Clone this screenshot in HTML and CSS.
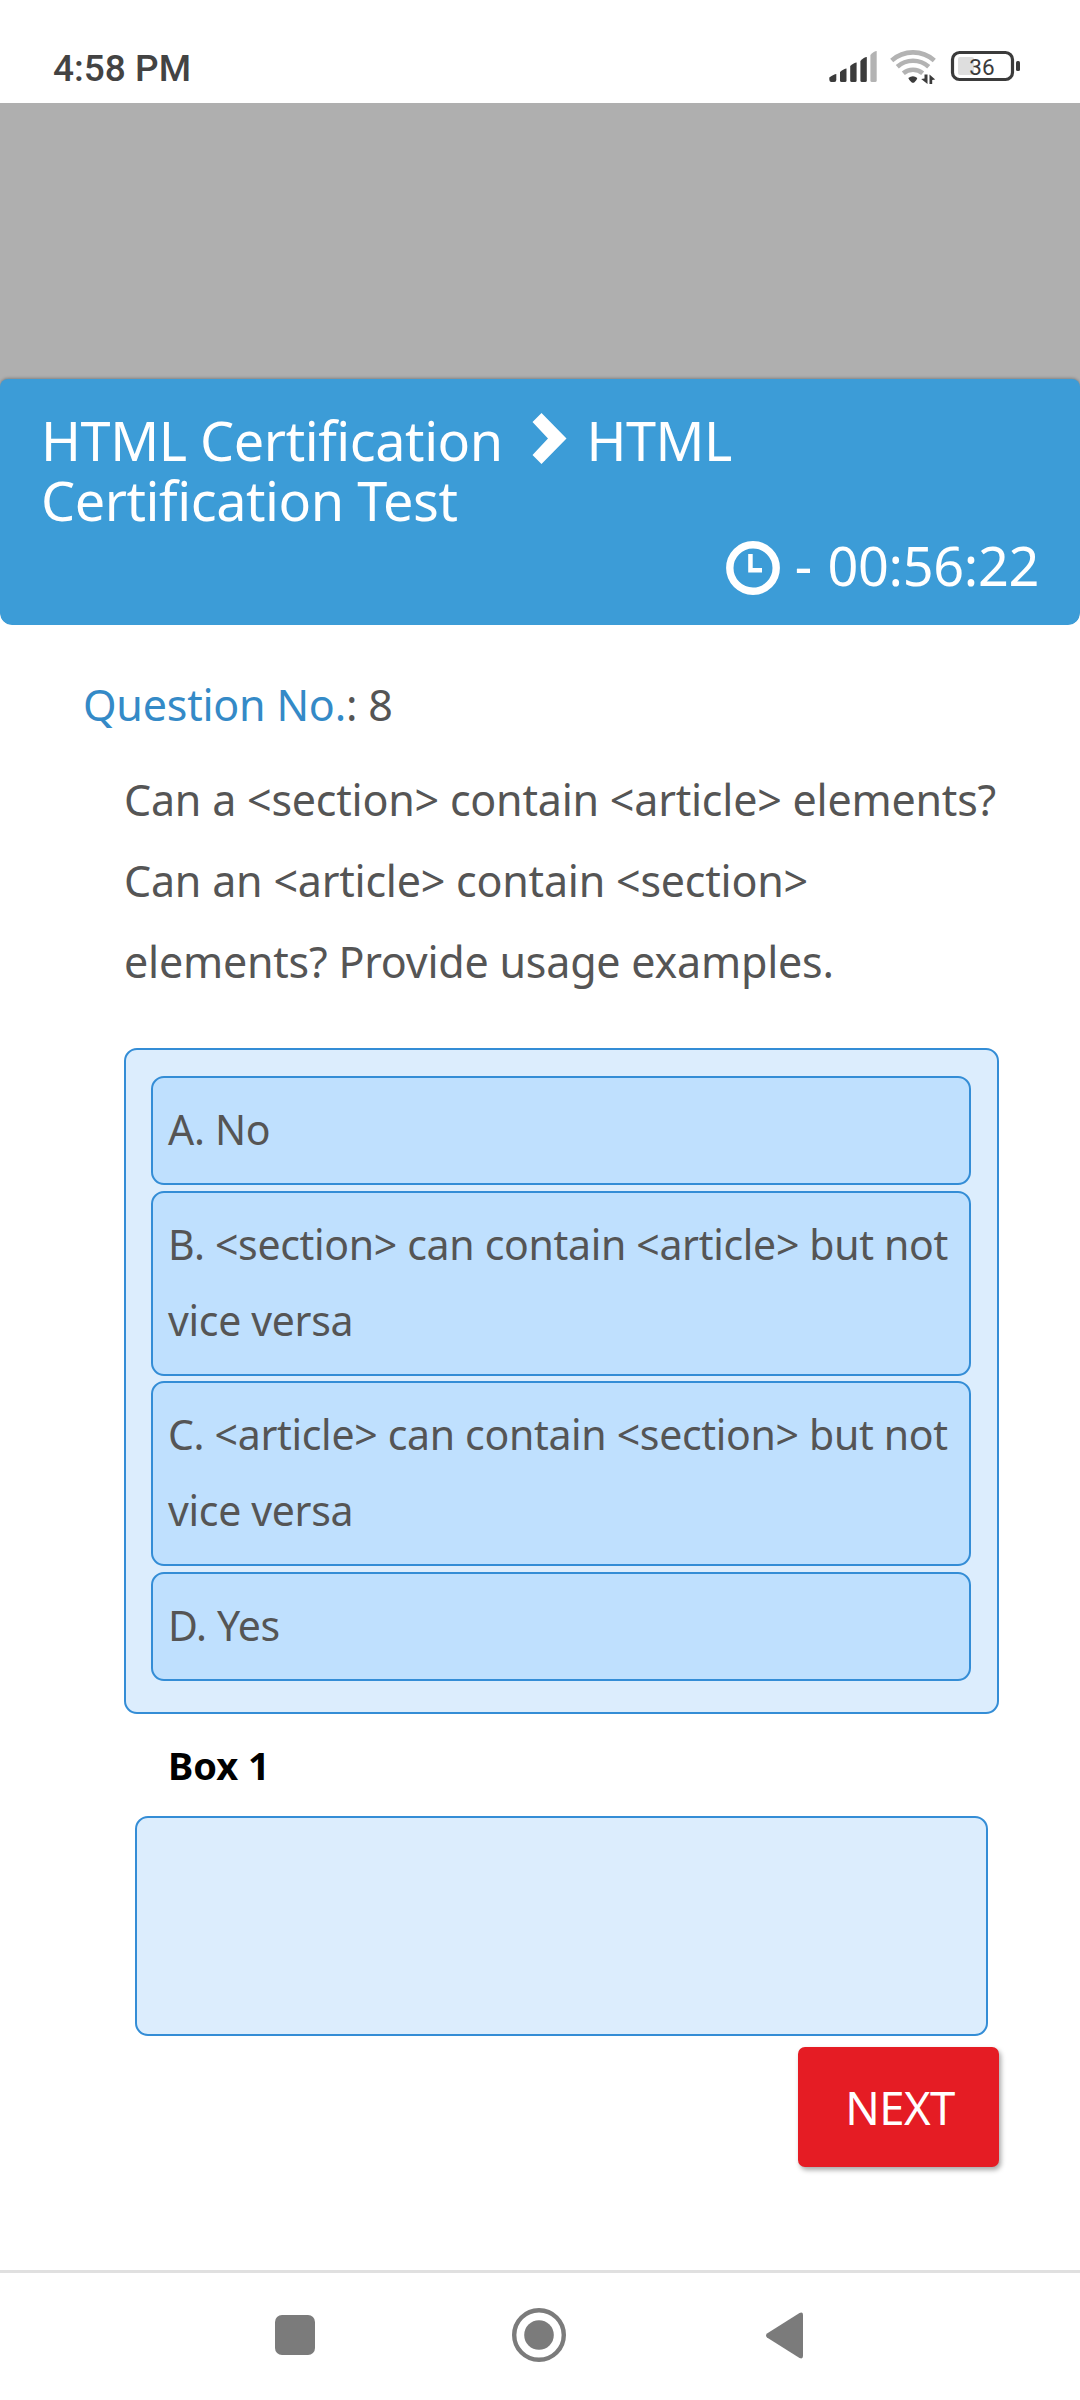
FILE: index.html
```html
<!DOCTYPE html>
<html lang="en">
<head>
<meta charset="utf-8">
<title>HTML Certification Test</title>
<link rel="stylesheet" href="styles.css">
</head>
<body>
<div class="status-bar">
  <span class="clock">4:58 PM</span>
  <svg class="status-icons" width="196" height="40" viewBox="826 46 196 40" fill="#3b3b3b">
    <path d="M829.3 79V77.5Q834 74 836.3 74V80Q836.3 82 834.3 82H831.3Q829.3 82 829.3 79Z"/>
    <path d="M840 72Q844 68.5 846.5 68.5V80.5Q846.5 82 845 82H841.500Q840 82 840 80.500Z"/>
    <path d="M850.200 66Q854 62.500 856.600 62.500V80.500Q856.600 82 855.100 82H851.700Q850.200 82 850.200 80.500Z"/>
    <path d="M860.400 61Q864 57 866.800 57V80.500Q866.800 82 865.300 82H861.900Q860.400 82 860.400 80.500Z"/>
    <path fill="#b3b3b3" d="M870.400 55Q874 51 876.700 51V80.500Q876.700 82 875.200 82H871.900Q870.400 82 870.400 80.500Z"/>
    <g fill="none" stroke="#b3b3b3" stroke-width="4.600">
      <path d="M891.700 60.500A32 32 0 0 1 934.300 60.500"/>
      <path d="M897.300 66.800A23.500 23.500 0 0 1 928.700 66.800"/>
      <path d="M903.300 73.300A15 15 0 0 1 922.700 73.300"/>
    </g>
    <path d="M908.300 78Q913 74.300 917.300 78Q917 80 914.500 82.200Q913 83.500 911.500 82.200Q909 80.200 908.300 78Z"/>
    <path d="M924.500 74.500H927.500V84L921.200 79L924.500 78.500ZM929.500 74.500L935.200 79.500L932.200 80V84H929.500Z"/>
    <rect x="952.500" y="52.500" width="60" height="27" rx="7" fill="none" stroke="#3b3b3b" stroke-width="3.200"/>
    <rect x="958" y="57" width="16" height="18" rx="2" fill="#dedede"/>
    <rect x="1016" y="61" width="4" height="10" rx="1.500"/>
    <text class="battery-level" x="982" y="74.800" text-anchor="middle">36</text>
  </svg>
</div>

<div class="backdrop"></div>

<header class="test-header">
  <h1 class="test-title">HTML Certification <svg class="chevron" width="54" height="52" viewBox="0 0 54 52"><path fill="#fff" d="M24.500 1L49.500 26.500L24.500 52L15.500 43L31 26.500L15.500 10Z"/></svg> HTML<br>Certification Test</h1>
  <div class="timer"><svg class="timer-icon" width="54" height="54" viewBox="0 0 54 54"><circle cx="27" cy="27" r="23.200" fill="none" stroke="#fff" stroke-width="7.400"/><path fill="#fff" d="M22.200 13H26.700V27H36V31.500H22.200Z"/></svg> <span class="timer-dash">-</span> 00:56:22</div>
</header>

<main class="content">
  <div class="question-number"><span class="question-label">Question No.</span>: 8</div>
  <p class="question">Can a &lt;section&gt; contain &lt;article&gt; elements? Can an &lt;article&gt; contain &lt;section&gt; elements? Provide usage examples.</p>
  <div class="options">
    <div class="option">A. No</div>
    <div class="option">B. &lt;section&gt; can contain &lt;article&gt; but not vice versa</div>
    <div class="option">C. &lt;article&gt; can contain &lt;section&gt; but not vice versa</div>
    <div class="option">D. Yes</div>
  </div>
  <div class="box-label">Box 1</div>
  <div class="answer-box"></div>
  <button class="next">NEXT</button>
</main>

<nav class="nav-bar">
  <svg width="40" height="40" viewBox="0 0 40 40"><rect width="40" height="40" rx="7" fill="#7b7b7b"/></svg>
  <svg class="home" width="54" height="54" viewBox="0 0 54 54"><circle cx="27" cy="27" r="24.800" fill="none" stroke="#7b7b7b" stroke-width="4.400"/><circle cx="27" cy="27" r="14.800" fill="#7b7b7b"/></svg>
  <svg width="37" height="47" viewBox="0 0 37 47"><path d="M1 21.500L33.500 1Q37 -0.500 37 3V44Q37 47.500 33.500 46L1 25.500Q-1 23.500 1 21.500Z" fill="#7b7b7b"/></svg>
</nav>
</body>
</html>
```
FILE: styles.css
```css
* {
  box-sizing: border-box;
}

body {
  margin: 0;
  width: 1080px;
  height: 2400px;
  display: flex;
  flex-direction: column;
  background: #fff;
  color: #555;
  font-family: "Noto Sans", "Open Sans", sans-serif;
}

svg {
  display: block;
}

.status-bar {
  flex: none;
  height: 103px;
  padding: 46px 58px 0 53px;
  display: flex;
  justify-content: space-between;
  align-items: flex-start;
}

.clock {
  padding-top: 1px;
  color: #434343;
  font: 500 37px/44px Roboto, sans-serif;
}

.battery-level {
  font: 400 22.500px Roboto, sans-serif;
}

.backdrop {
  flex: none;
  height: 288px;
  margin-bottom: -12px;
  background: #afafaf;
}

.test-header {
  flex: none;
  position: relative;
  height: 246px;
  padding: 31px 41px 0;
  border-radius: 8px 8px 12px 12px;
  background: #3c9cd7;
  box-shadow: 0 -1px 3px rgba(0, 0, 0, 0.25);
  clip-path: inset(-6px 0 0 0 round 0 0 12px 12px);
  color: #fff;
}

.test-title {
  margin: 0 0 5px;
  font-size: 54px;
  font-weight: 400;
  line-height: 60px;
  letter-spacing: -0.450px;
}

.chevron {
  display: inline-block;
  margin: 0 1.500px 0 1px;
  vertical-align: -3px;
}

.timer {
  text-align: right;
  font-size: 54px;
  line-height: 60px;
  letter-spacing: -0.350px;
}

.timer-icon {
  display: inline-block;
  margin-right: 1px;
  vertical-align: -9px;
}

.timer-dash {
  margin-right: 2px;
}

.content {
  flex: 1;
  display: flex;
  flex-direction: column;
  padding: 39px 81px 0 83px;
}

.question-number,
.question {
  font-size: 43px;
  line-height: 81px;
  letter-spacing: -0.220px;
}

.question-label {
  color: #348ac7;
}

.question {
  margin: 14px 0 46px 41px;
}

.options {
  display: flex;
  flex-direction: column;
  gap: 5.670px;
  margin-left: 41px;
  padding: 26px 26px 31px 25px;
  border: 2px solid #348dd6;
  border-radius: 13px;
  background: #dcedfd;
}

.option {
  padding: 13px 14px 16px 15px;
  border: 2px solid #348dd6;
  border-radius: 13px;
  background: #bfe0fe;
  font-size: 41px;
  line-height: 76px;
  letter-spacing: -0.320px;
}

.box-label {
  margin: 26px 0 26px 85px;
  color: #000;
  font-size: 38px;
  font-weight: 700;
  line-height: 50px;
}

.answer-box {
  height: 220px;
  margin: 0 11px 11px 52px;
  border: 2px solid #348dd6;
  border-radius: 13px;
  background: #dcedfd;
}

.next {
  align-self: flex-end;
  width: 201px;
  height: 120px;
  padding: 0 0 0 3px;
  border: 0;
  border-radius: 7px;
  background: #e51c24;
  box-shadow: 2px 3px 5px rgba(0, 0, 0, 0.35);
  color: #fff;
  font: 400 45.500px/120px "Noto Sans", "Open Sans", sans-serif;
  letter-spacing: -0.600px;
}

.nav-bar {
  flex: none;
  height: 130px;
  border-top: 3px solid #e0e0e0;
  padding: 0 277px 3px 275px;
  display: flex;
  justify-content: space-between;
  align-items: center;
}

.home {
  margin-right: 3px;
}
```
